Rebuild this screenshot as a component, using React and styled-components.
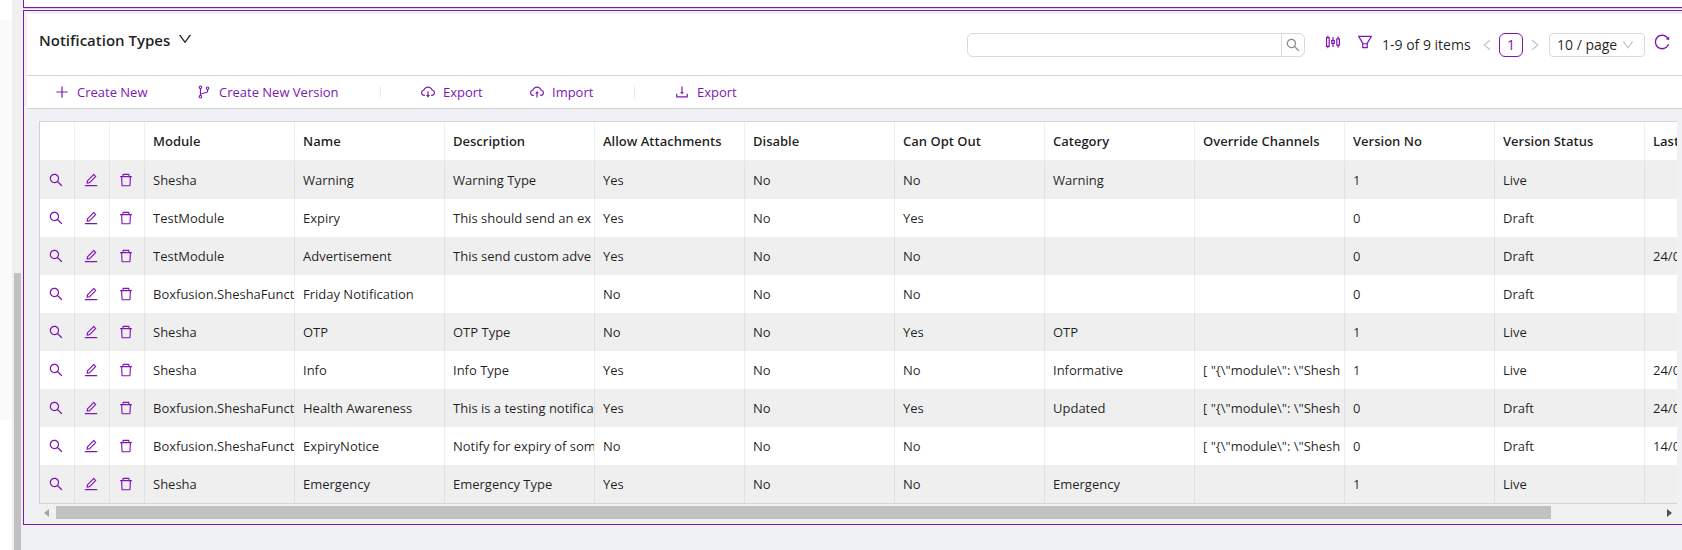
import React from 'react';
import styled, { createGlobalStyle } from 'styled-components';
import {
  AiOutlineSearch, AiOutlineEdit, AiOutlineDelete, AiOutlinePlus, AiOutlineBranches,
  AiOutlineCloudDownload, AiOutlineCloudUpload, AiOutlineDownload, AiOutlineSliders,
  AiOutlineFilter, AiOutlineReload, AiOutlineLeft, AiOutlineRight, AiOutlineDown,
} from 'react-icons/ai';

const purple = '#7f16b5';
const canvas = '#f0f1f5';
const line = '#d3d3d3';

const GlobalStyle = createGlobalStyle`
  *, *::before, *::after { box-sizing: border-box; }
  body {
    margin: 0;
    overflow: hidden;
    background: ${canvas};
    color: rgba(0, 0, 0, 0.88);
    font: 13px/22px 'Open Sans', 'Segoe UI', sans-serif;
  }
  button, input, select { font: inherit; color: inherit; margin: 0; }
  svg { display: block; flex: none; }
`;

const Page = styled.div`
  display: flex;
  min-height: 100vh;
`;

const Sidebar = styled.aside`
  flex: none;
  width: 12px;
  padding: 20px 0 130px;
  background: #fff;
  display: flex;
`;

const SidebarBody = styled.div`
  flex: 1;
  background: #fafafa;
`;

const Gutter = styled.div`
  flex: none;
  display: flex;
  width: 9px;
  margin-top: 3px;
  padding: 270px 0 0 2px;
  background: #f0f0f0;
`;

const GutterThumb = styled.div`
  flex: 1;
  background: #c1c1c1;
`;

const Content = styled.main`
  flex: 1;
  min-width: 0;
  padding-left: 2px;
`;

const UpperPanel = styled.section`
  height: 8px;
  background: #fff;
  border: solid ${purple};
  border-width: 0 0 1px 1px;
  box-shadow: 0 1px 0 #d9d9d9;
`;

const Panel = styled.section`
  margin-top: 2px;
  padding: 3px 0 3px 3px;
  border: solid ${purple};
  border-width: 1px 0 1px 1px;
`;

const Header = styled.header`
  display: flex;
  justify-content: space-between;
  align-items: flex-start;
  height: 62px;
  padding: 15px 11px 0 12px;
  background: #fff;
  border-bottom: 1px solid ${line};
`;

const ViewButton = styled.button`
  display: flex;
  align-items: center;
  gap: 7px;
  padding: 0;
  border: 0;
  background: none;
  font-size: 15px;
  font-weight: 600;

  svg { margin-bottom: 2px; }
`;

const Controls = styled.div`
  display: flex;
  align-items: center;
  padding-top: 4px;
  font-size: 14px;
`;

const Search = styled.form`
  display: flex;
  width: 338px;
  height: 24px;
  margin-right: 19px;
  border: 1px solid #d9d9d9;
  border-radius: 6px;
  overflow: hidden;
`;

const SearchInput = styled.input`
  flex: 1;
  min-width: 0;
  padding: 0 8px;
  border: 0;
  outline: 0;
  background: none;
`;

const SearchButton = styled.button`
  display: flex;
  align-items: center;
  justify-content: center;
  width: 23px;
  padding: 0;
  border: 0;
  border-left: 1px solid #d9d9d9;
  background: none;
  && { color: #8c8c8c; }
`;

const IconButton = styled.button`
  display: flex;
  padding: 0;
  border: 0;
  background: none;
  margin-right: ${(p) => p.$after || 0}px;
  && { color: ${(p) => (p.$muted ? '#bfbfbf' : purple)}; }
`;

const RaisedIcons = styled.div`
  display: flex;
  padding-bottom: 6px;
`;

const Total = styled.span`
  width: 98px;
  white-space: nowrap;
`;

const PageNumber = styled.button`
  width: 24px;
  height: 24px;
  margin: 0 5px;
  padding: 0;
  border: 1px solid ${purple};
  border-radius: 6px;
  background: #fff;
  && { color: ${purple}; margin: 0 5px; }
`;

const SizePicker = styled.label`
  display: flex;
  align-items: center;
  width: 96px;
  height: 24px;
  margin: 0 8px 0 7px;
  padding-right: 9px;
  border: 1px solid #d9d9d9;
  border-radius: 4px;
  color: #bfbfbf;
`;

const SizeSelect = styled.select`
  flex: 1;
  min-width: 0;
  padding: 0 0 0 7px;
  border: 0;
  outline: 0;
  background: none;
  appearance: none;
  && { color: rgba(0, 0, 0, 0.88); }
`;

const Toolbar = styled.div`
  display: flex;
  align-items: center;
  height: 33px;
  padding-left: 27px;
  background: #fff;
  border-bottom: 1px solid ${line};
`;

const Action = styled.button`
  display: flex;
  align-items: center;
  gap: 7px;
  width: ${(p) => p.$width}px;
  padding: 0;
  border: 0;
  background: none;
  white-space: nowrap;
  && { color: ${purple}; }
`;

const Divider = styled.span`
  width: 1px;
  height: 13px;
  margin-right: 39px;
  background: #ebebeb;
`;

const Grid = styled.div`
  margin: 12px 5px 0 12px;
  overflow: hidden;
  border: solid ${line};
  border-width: 1px 0 1px 1px;
`;

const Table = styled.table`
  width: 1755px;
  table-layout: fixed;
  border-collapse: separate;
  border-spacing: 0;
  background: #fff;
`;

const Col = styled.col`
  width: ${(p) => p.$width}px;
`;

const HeadCell = styled.th`
  height: 39px;
  padding: 0 8px;
  border-right: 1px solid #f0f0f0;
  border-bottom: 1px solid #f0f0f0;
  text-align: left;
  font-weight: 600;
  white-space: nowrap;
`;

const Row = styled.tr`
  background: ${(p) => (p.$shaded ? '#efefef' : '#fff')};
`;

const Cell = styled.td`
  height: 38px;
  padding: 0 0 0 8px;
  border-right: 1px solid rgba(0, 0, 0, 0.06);
  overflow: hidden;
  white-space: nowrap;
`;

const ScrollBar = styled.div`
  display: flex;
  align-items: center;
  height: 17px;
  margin: 0 5px 0 12px;
  padding: 0 5px;
  background: #f0f0f0;
`;

const ScrollTrack = styled.div`
  flex: 1;
  margin: 0 4px 0 7px;
`;

const ScrollThumb = styled.div`
  width: 93%;
  height: 13px;
  background: #c1c1c1;
`;

const columns = ['Module', 'Name', 'Description', 'Allow Attachments', 'Disable', 'Can Opt Out',
  'Category', 'Override Channels', 'Version No', 'Version Status', 'Last'];

const channels = '[ "{\\"module\\": \\"Shesh';

const rows = [
  ['Shesha', 'Warning', 'Warning Type', 'Yes', 'No', 'No', 'Warning', '', '1', 'Live', ''],
  ['TestModule', 'Expiry', 'This should send an ex', 'Yes', 'No', 'Yes', '', '', '0', 'Draft', ''],
  ['TestModule', 'Advertisement', 'This send custom adve', 'Yes', 'No', 'No', '', '', '0', 'Draft', '24/0'],
  ['Boxfusion.SheshaFunct', 'Friday Notification', '', 'No', 'No', 'No', '', '', '0', 'Draft', ''],
  ['Shesha', 'OTP', 'OTP Type', 'No', 'No', 'Yes', 'OTP', '', '1', 'Live', ''],
  ['Shesha', 'Info', 'Info Type', 'Yes', 'No', 'No', 'Informative', channels, '1', 'Live', '24/0'],
  ['Boxfusion.SheshaFunct', 'Health Awareness', 'This is a testing notifica', 'Yes', 'No', 'Yes', 'Updated', channels, '0', 'Draft', '24/0'],
  ['Boxfusion.SheshaFunct', 'ExpiryNotice', 'Notify for expiry of som', 'No', 'No', 'No', '', channels, '0', 'Draft', '14/0'],
  ['Shesha', 'Emergency', 'Emergency Type', 'Yes', 'No', 'No', 'Emergency', '', '1', 'Live', ''],
];

const rowActions = [
  ['View', AiOutlineSearch],
  ['Edit', AiOutlineEdit],
  ['Delete', AiOutlineDelete],
];

export default function App() {
  return (
    <>
      <GlobalStyle />
      <Page>
        <Sidebar><SidebarBody /></Sidebar>
        <Gutter><GutterThumb /></Gutter>
        <Content>
          <UpperPanel />
          <Panel>
            <Header>
              <ViewButton type="button">Notification Types <AiOutlineDown size={16} /></ViewButton>
              <Controls>
                <Search>
                  <SearchInput type="text" aria-label="Search" />
                  <SearchButton type="button" aria-label="Search"><AiOutlineSearch size={16} /></SearchButton>
                </Search>
                <RaisedIcons>
                  <IconButton type="button" aria-label="Columns" $after={14}><AiOutlineSliders size={18} /></IconButton>
                  <IconButton type="button" aria-label="Filter" $after={8}><AiOutlineFilter size={18} /></IconButton>
                </RaisedIcons>
                <Total>1-9 of 9 items</Total>
                <IconButton type="button" aria-label="Previous page" $muted><AiOutlineLeft size={14} /></IconButton>
                <PageNumber type="button">1</PageNumber>
                <IconButton type="button" aria-label="Next page" $muted><AiOutlineRight size={14} /></IconButton>
                <SizePicker>
                  <SizeSelect aria-label="Page size"><option>10 / page</option></SizeSelect>
                  <AiOutlineDown size={14} />
                </SizePicker>
                <RaisedIcons>
                  <IconButton type="button" aria-label="Reload"><AiOutlineReload size={18} /></IconButton>
                </RaisedIcons>
              </Controls>
            </Header>
            <Toolbar>
              <Action type="button" $width={142}><AiOutlinePlus size={16} />Create New</Action>
              <Action type="button" $width={184}><AiOutlineBranches size={16} />Create New Version</Action>
              <Divider />
              <Action type="button" $width={109}><AiOutlineCloudDownload size={16} />Export</Action>
              <Action type="button" $width={105}><AiOutlineCloudUpload size={16} />Import</Action>
              <Divider />
              <Action type="button" $width={66}><AiOutlineDownload size={16} />Export</Action>
            </Toolbar>
            <Grid>
              <Table>
                <colgroup>
                  {rowActions.map(([name]) => <Col key={name} $width={35} />)}
                  {columns.map((name) => <Col key={name} $width={150} />)}
                </colgroup>
                <thead>
                  <tr>
                    {rowActions.map(([name]) => <HeadCell key={name} />)}
                    {columns.map((name) => <HeadCell key={name}>{name}</HeadCell>)}
                  </tr>
                </thead>
                <tbody>
                  {rows.map((row, i) => (
                    <Row key={i} $shaded={i % 2 === 0}>
                      {rowActions.map(([name, Icon]) => (
                        <Cell key={name}>
                          <IconButton type="button" aria-label={name}><Icon size={16} /></IconButton>
                        </Cell>
                      ))}
                      {row.map((text, j) => <Cell key={j}>{text}</Cell>)}
                    </Row>
                  ))}
                </tbody>
              </Table>
            </Grid>
            <ScrollBar>
              <svg width="5" height="8" viewBox="0 0 5 8"><path d="M5 0v8L0 4z" fill="#a3a3a3" /></svg>
              <ScrollTrack><ScrollThumb /></ScrollTrack>
              <svg width="5" height="8" viewBox="0 0 5 8"><path d="M0 0v8l5-4z" fill="#505050" /></svg>
            </ScrollBar>
          </Panel>
        </Content>
      </Page>
    </>
  );
}
